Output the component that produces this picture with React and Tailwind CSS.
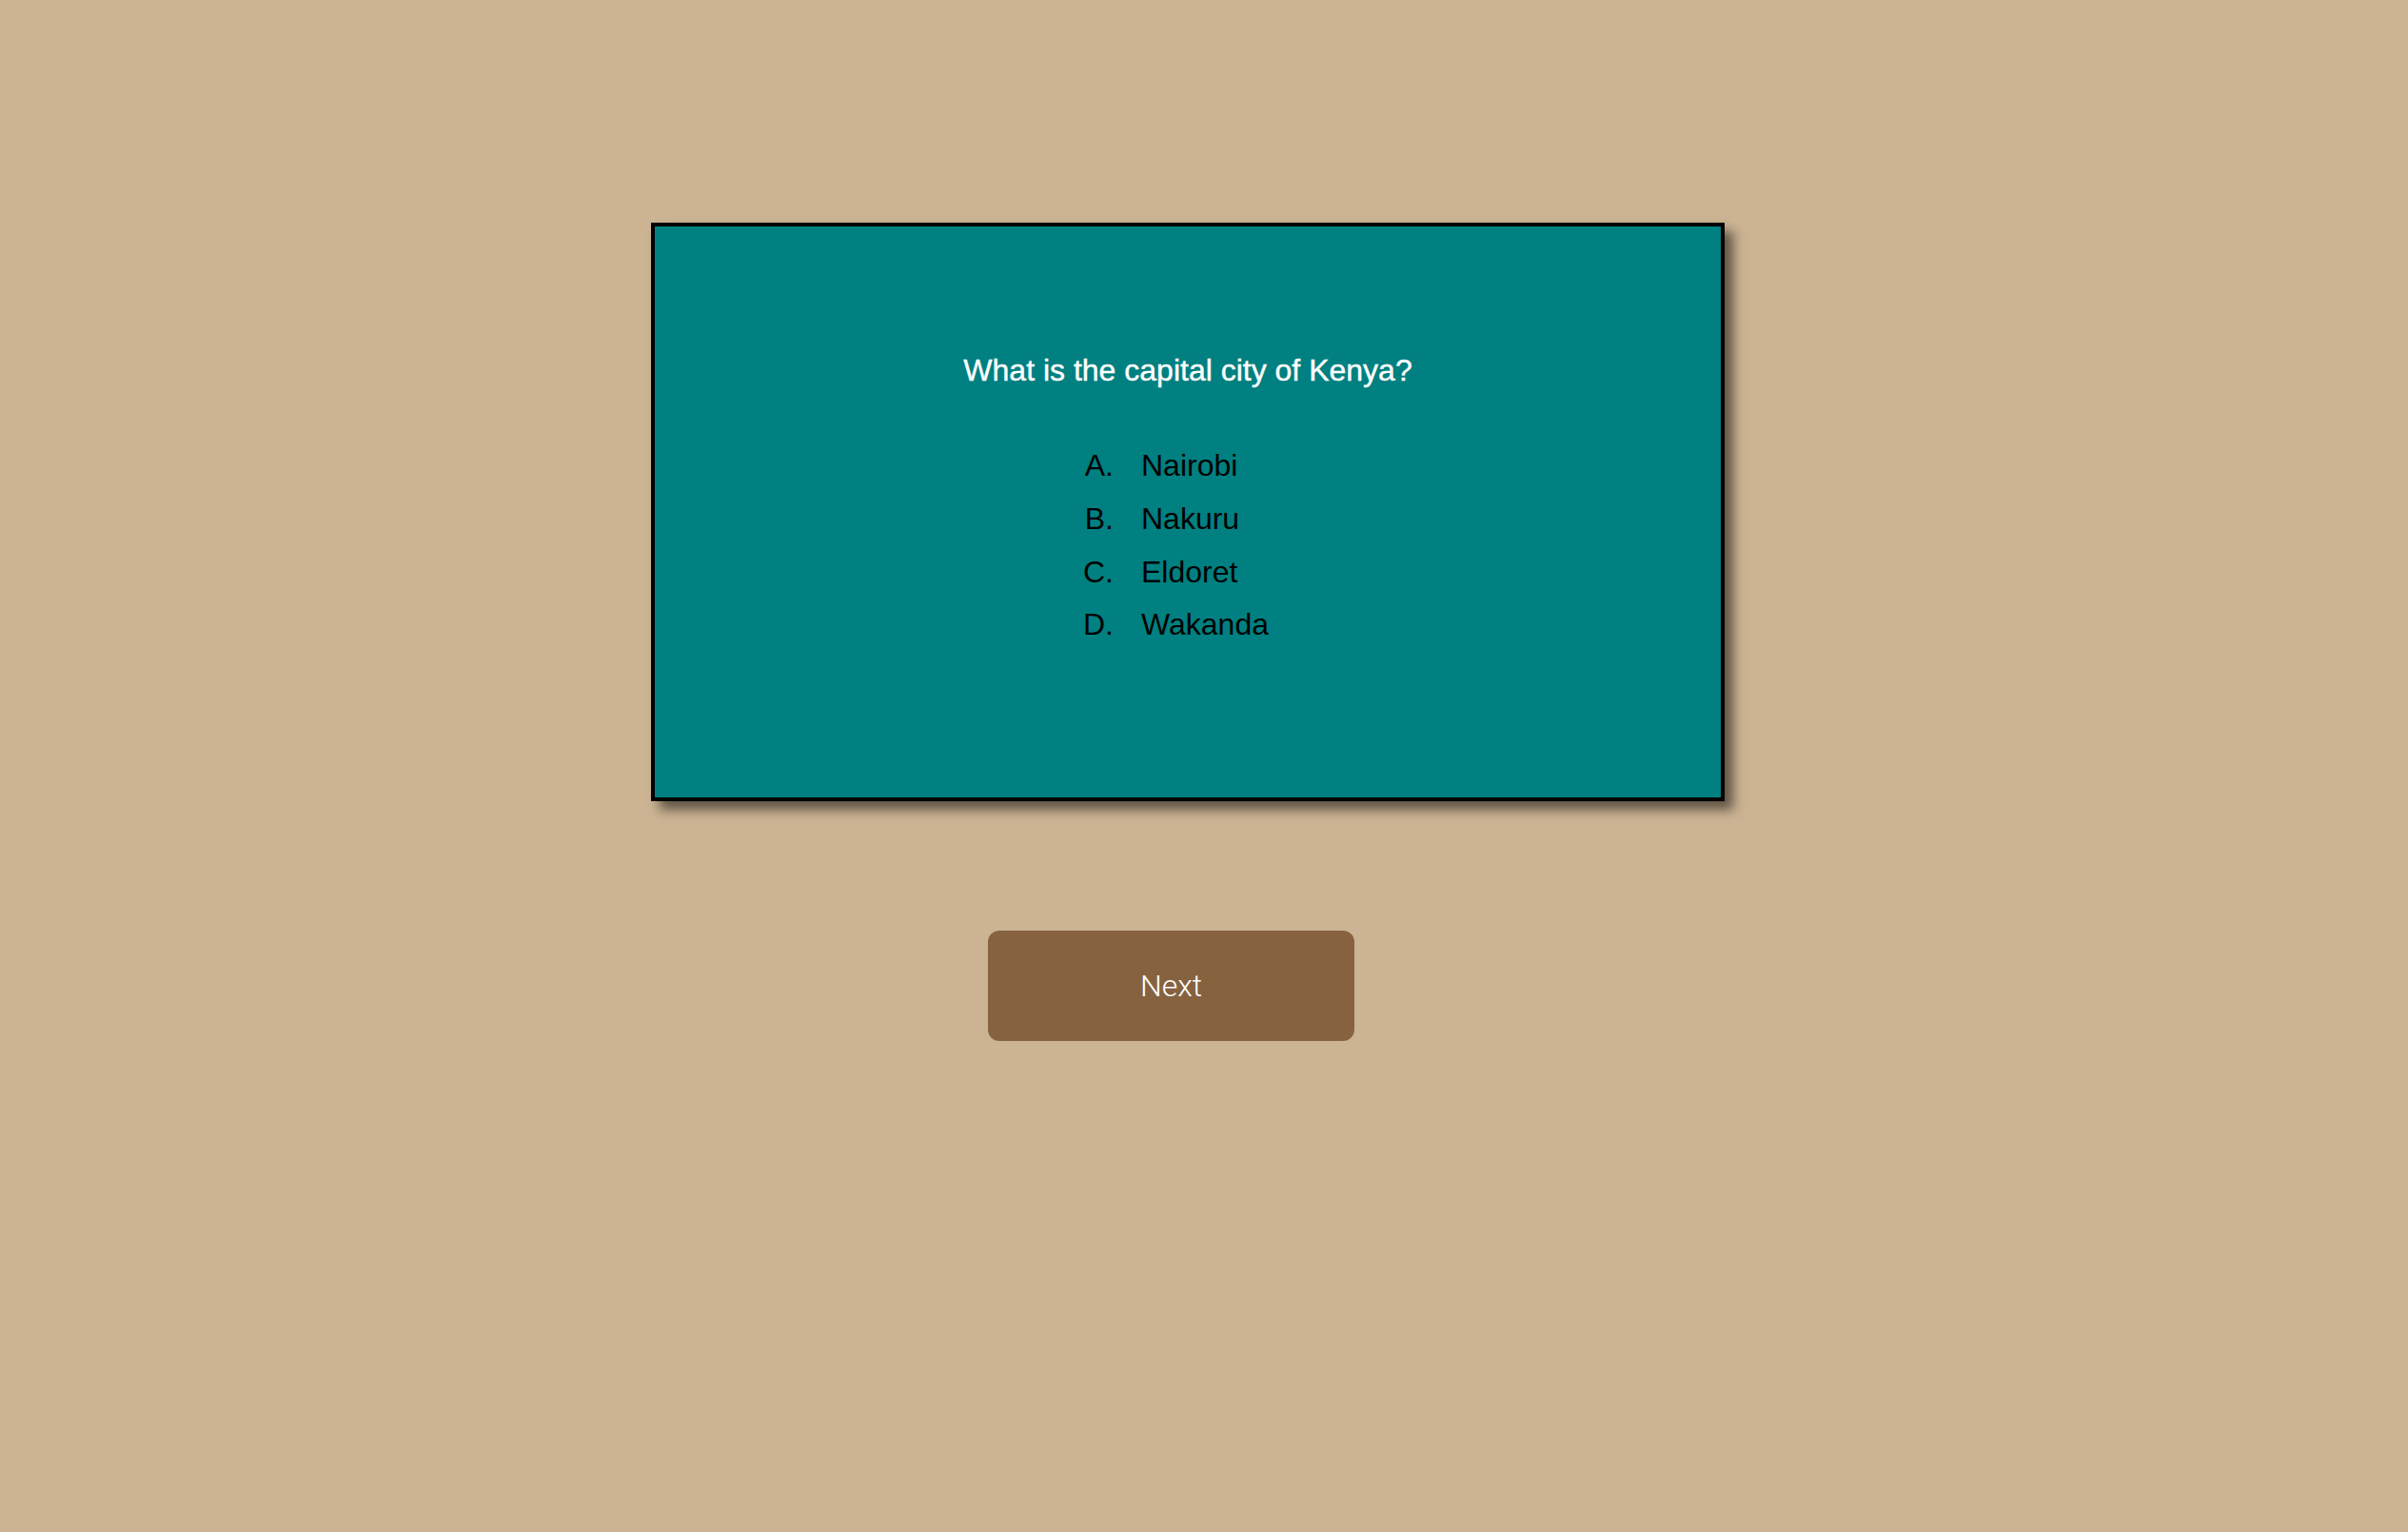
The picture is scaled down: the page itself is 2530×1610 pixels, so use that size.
import React from "react";

const options = [
  { letter: "A.", text: "Nairobi" },
  { letter: "B.", text: "Nakuru" },
  { letter: "C.", text: "Eldoret" },
  { letter: "D.", text: "Wakanda" },
];

const App = () => {
  return (
    <div className="min-h-[1610px] w-full bg-[#cbb393] pl-[684px] pt-[234px] font-['Liberation_Sans',Arial,sans-serif]">
      {/* Question card */}
      <div className="w-[1128px] h-[608px] bg-[#008080] border-4 border-black shadow-[9px_9px_11px_rgba(0,0,0,0.52)] pt-[133px]">
        <h2 className="text-center text-white text-[32px] leading-[36px] [-webkit-text-stroke:0.4px_white]">
          What is the capital city of Kenya?
        </h2>
        <ul className="mt-[55px] pl-[425px] text-black text-[32px] leading-[55.8px]">
          {options.map((opt) => (
            <li key={opt.letter} className="flex">
              <span className="w-[86px] pr-[29px] text-right">{opt.letter}</span>
              <span>{opt.text}</span>
            </li>
          ))}
        </ul>
      </div>

      {/* Next button */}
      <button className="ml-[354px] mt-[136px] w-[385px] h-[116px] rounded-[12px] bg-[#86623f] text-white text-[32px] font-light font-['Roboto',sans-serif]">
        Next
      </button>
    </div>
  );
};

export default App;
